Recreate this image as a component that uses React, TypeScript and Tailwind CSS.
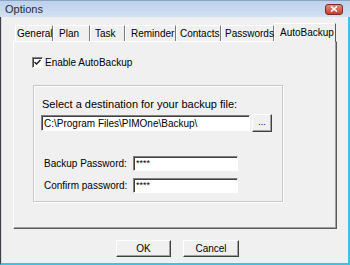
import React from 'react';

const tabs = [
  { label: 'General', w: 'w-[38px]', pl: 'pl-[1px]' },
  { label: 'Plan', w: 'w-[37px]', pl: 'pl-[5px]' },
  { label: 'Task', w: 'w-[35px]', pl: 'pl-[4px]' },
  { label: 'Reminder', w: 'w-[51px]', pl: 'pl-[5px]' },
  { label: 'Contacts', w: 'w-[45px]', pl: 'pl-[3px]' },
  { label: 'Passwords', w: 'w-[53px]', pl: 'pl-[3px]' },
];

const sunken = 'bg-white border-t border-l border-t-[#808080] border-l-[#808080] border-b border-r border-b-[#ffffff] border-r-[#ffffff] shadow-[inset_1px_1px_0_#404040]';
const raised = 'bg-[#f0f0f0] border-t border-l border-t-white border-l-white border-b border-r border-b-[#404040] border-r-[#404040] shadow-[inset_-1px_-1px_0_#a0a0a0]';

export default function App() {
  return (
    <div className="w-[350px] h-[265px] bg-[#f0f0f0] flex flex-col text-[10px] text-black font-['Liberation_Sans',Tahoma,sans-serif] leading-[13px] overflow-hidden">
      {/* title bar */}
      <div className="h-[17px] shrink-0 flex items-center justify-between pl-[5px] pr-[7px] bg-gradient-to-b from-[#bcd1ec] to-[#d2e1f3] border-t border-[#8ea3bd]">
        <span className="text-[11px] text-[#1e2a3a]">Options</span>
        <div className="w-[18px] h-[11px] rounded-[3px] border border-[#7a2a22] bg-gradient-to-b from-[#e08a78] to-[#c2402e] flex items-center justify-center">
          <svg width="8" height="6" viewBox="0 0 8 6">
            <path d="M1 0.5 L7 5.5 M7 0.5 L1 5.5" stroke="white" strokeWidth="1.6" />
          </svg>
        </div>
      </div>

      <div className="flex-1 flex flex-col border-l border-l-[#3c4048] border-r-2 border-r-[#36c6e4] border-b-2 border-b-[#36c6e4]">
        <div className="flex-1 flex flex-col pl-[11px] pt-[6px] border-l border-l-[#d8d8d8]">
          {/* tabs */}
          <div className="flex items-end pl-[2px] h-[18px] relative z-10">
            {tabs.map((t) => (
              <div
                key={t.label}
                className={`${t.w} ${t.pl} h-[16px] flex items-center border-t border-l border-t-white border-l-white border-r border-r-[#7a7a7a] whitespace-nowrap`}
              >
                {t.label}
              </div>
            ))}
            <div className="w-[62px] h-[19px] -mb-[1px] pl-[5px] pb-[2px] flex items-center bg-[#f0f0f0] border-t border-l border-t-white border-l-white border-r border-r-[#5a5a5a] whitespace-nowrap">
              AutoBackup
            </div>
          </div>

          {/* panel */}
          <div className="w-[324px] h-[188px] flex flex-col border-t border-l border-t-white border-l-white border-r border-b border-r-[#5a5a5a] border-b-[#5a5a5a] shadow-[inset_-1px_-1px_0_#a0a0a0]">
            <label className="mt-[14px] ml-[18px] flex items-center gap-[2px] h-[12px]">
              <span className="w-[11px] h-[11px] bg-white border-t border-l border-t-[#808080] border-l-[#808080] border-b border-r border-b-white border-r-white shadow-[inset_1px_1px_0_#404040] flex items-center justify-center">
                <svg width="7" height="7" viewBox="0 0 7 7">
                  <path d="M0.5 3 L2.5 5 L6.5 1" stroke="#202020" strokeWidth="1.5" fill="none" />
                </svg>
              </span>
              <span>Enable AutoBackup</span>
            </label>

            {/* group box */}
            <div className="mt-[17px] ml-[19px] w-[250px] h-[117px] border border-[#c8c8c8] shadow-[inset_1px_1px_0_#ffffff,1px_1px_0_#ffffff] flex flex-col pl-[8px]">
              <div className="mt-[12px] text-[11px]">Select a destination for your backup file:</div>
              <div className="mt-[3px] flex items-center gap-[2px] -ml-[1px]">
                <div className={`${sunken} w-[209px] h-[16px] pl-[2px] flex items-center`}>C:\Program Files\PIMOne\Backup\</div>
                <div className={`${raised} w-[20px] h-[18px] flex items-center justify-center text-[9px] pb-[2px]`}>...</div>
              </div>
              <div className="mt-[24px] flex items-center h-[15px]">
                <span className="w-[91px] pl-[2px] whitespace-nowrap">Backup Password:</span>
                <div className={`${sunken} w-[105px] h-[15px] pl-[2px] flex items-center text-[9px]`}>****</div>
              </div>
              <div className="mt-[7px] flex items-center h-[15px]">
                <span className="w-[91px] pl-[2px] whitespace-nowrap">Confirm password:</span>
                <div className={`${sunken} w-[105px] h-[15px] pl-[2px] flex items-center text-[9px]`}>****</div>
              </div>
            </div>
          </div>

          {/* buttons */}
          <div className="mt-[11px] flex pl-[103px] gap-[12px]">
            <div className={`${raised} w-[55px] h-[17px] flex items-center justify-center`}>OK</div>
            <div className={`${raised} w-[56px] h-[17px] flex items-center justify-center`}>Cancel</div>
          </div>
        </div>
      </div>
    </div>
  );
}
